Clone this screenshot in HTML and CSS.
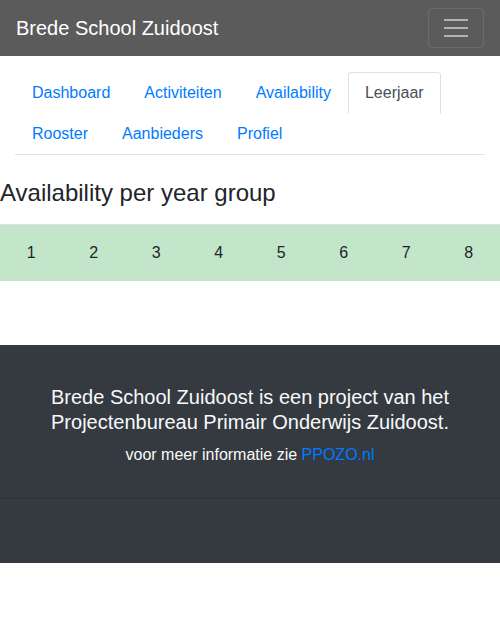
FILE: index.html
```html
<!DOCTYPE html>
<html lang="nl">
<head>
<meta charset="utf-8">
<title>Brede School Zuidoost</title>
<link rel="stylesheet" href="styles.css">
</head>
<body>
<header class="navbar">
  <a class="brand" href="#">Brede School Zuidoost</a>
  <button class="toggler" type="button" aria-label="Menu">
    <span class="toggler-icon"><span></span><span></span><span></span></span>
  </button>
</header>
<div class="page">
  <div class="tabs-wrap">
    <ul class="tabs">
      <li class="tab-item"><a class="tab-link" href="#">Dashboard</a></li>
      <li class="tab-item"><a class="tab-link" href="#">Activiteiten</a></li>
      <li class="tab-item"><a class="tab-link" href="#">Availability</a></li>
      <li class="tab-item"><a class="tab-link active" href="#">Leerjaar</a></li>
      <li class="tab-item"><a class="tab-link" href="#">Rooster</a></li>
      <li class="tab-item"><a class="tab-link" href="#">Aanbieders</a></li>
      <li class="tab-item"><a class="tab-link" href="#">Profiel</a></li>
    </ul>
  </div>
  <h4 class="title">Availability per year group</h4>
  <table class="years">
    <tbody>
      <tr class="success">
        <td>1</td><td>2</td><td>3</td><td>4</td><td>5</td><td>6</td><td>7</td><td>8</td>
      </tr>
    </tbody>
  </table>
  <div class="overflow-spacer"></div>
</div>
<footer class="footer">
  <div class="footer-top">
    <h5 class="footer-title">Brede School Zuidoost is een project van het Projectenbureau Primair Onderwijs Zuidoost.</h5>
    <p class="footer-text">voor meer informatie zie <a href="#">PPOZO.nl</a></p>
  </div>
  <div class="footer-bottom"></div>
</footer>
</body>
</html>
```
FILE: styles.css
```css
* { box-sizing: border-box; }
html { overflow-x: scroll; overflow-y: hidden; }
html, body { margin: 0; padding: 0; }
body {
  font-family: "Liberation Sans", Arial, sans-serif;
  font-size: 16px;
  line-height: 1.5;
  color: #212529;
  background: #fff;
}
a { text-decoration: none; color: #007bff; }

.navbar {
  display: flex;
  align-items: center;
  justify-content: space-between;
  height: 56px;
  padding: 0 16px;
  background: #5b5b5b;
}
.brand {
  color: #fff;
  font-size: 20px;
  line-height: 30px;
}
.toggler {
  width: 56px;
  height: 40px;
  padding: 0;
  background: transparent;
  border: 1px solid rgba(255,255,255,0.1);
  border-radius: 4px;
  display: flex;
  align-items: center;
  justify-content: center;
}
.toggler-icon {
  display: flex;
  flex-direction: column;
  gap: 6px;
  width: 24px;
}
.toggler-icon span {
  display: block;
  height: 2px;
  background: #b3b3b3;
}

.tabs-wrap { padding: 16px 15px 0; }
.tabs {
  list-style: none;
  margin: 0;
  padding: 0;
  display: flex;
  flex-wrap: wrap;
  border-bottom: 1px solid #dee2e6;
}
.tab-item { margin-bottom: -1px; }
.tab-link {
  display: block;
  padding: 8px 16px;
  border: 1px solid transparent;
  border-radius: 4px 4px 0 0;
  line-height: 24px;
}
.tab-link.active {
  color: #495057;
  background: #fff;
  border-color: #dee2e6 #dee2e6 #fff;
}

.title {
  margin: 24px 0 16px;
  font-size: 24px;
  font-weight: 500;
  line-height: 1.2;
}
.years {
  width: 100%;
  border-collapse: collapse;
  table-layout: fixed;
  margin: 0;
}
.years td {
  text-align: center;
  padding: 16px 0;
  line-height: 24px;
  border-top: 1px solid #dee2e6;
}
.years .success td { background: #c3e6cb; }
.overflow-spacer { width: 515px; height: 64px; }

.footer { background: #343a40; color: #f8f9fa; text-align: center; }
.footer-top { padding: 40px 16px 15px; border-bottom: 1px solid #2d3237; }
.footer-title {
  margin: 0 auto 8px;
  font-size: 20px;
  font-weight: 500;
  line-height: 25px;
  max-width: 420px;
}
.footer-text { margin: 0 0 16px; }
.footer-bottom { height: 64px; }
```
